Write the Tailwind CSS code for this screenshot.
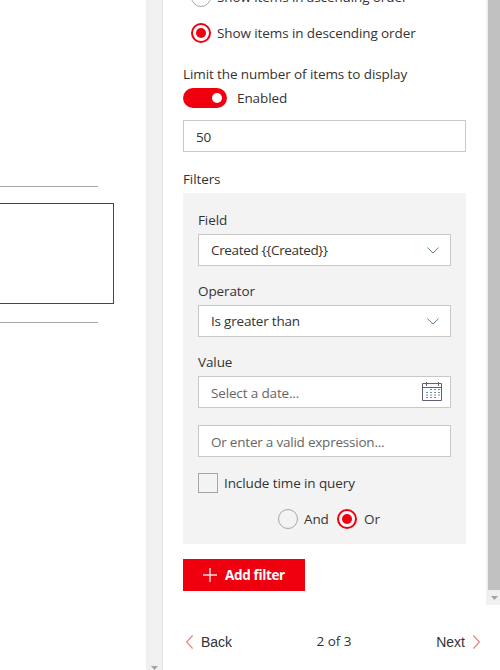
<!DOCTYPE html>
<html lang="en">
<head>
<meta charset="utf-8">
<title>Filter settings</title>
<script src="https://cdn.jsdelivr.net/npm/@tailwindcss/browser@4"></script>
</head>
<body class="w-[500px] h-[670px] overflow-hidden bg-white flex text-[13.5px] tracking-[-0.1px] leading-5 text-[#333] font-['Open_Sans','Noto_Sans',sans-serif] whitespace-nowrap">
  <section class="w-[146px] shrink-0 pt-[186px]">
    <div class="w-[98px] h-px bg-[#a6a6a6]"></div>
    <div class="mt-4 w-[114px] h-[101px] border border-l-0 border-[#e3000f]"></div>
    <div class="mt-[18px] w-[98px] h-px bg-[#a6a6a6]"></div>
  </section>
  <div class="w-[17px] shrink-0 bg-[#f0f0f0] border-r border-[#e5e5e5] flex flex-col justify-end items-center">
    <svg class="w-[7px] h-[4px]" viewBox="0 0 7 4"><path d="M0 0H7L3.5 4Z" fill="#a3a3a3"/></svg>
  </div>
  <main class="w-[337px] shrink-0">
    <div class="flex h-[605px]">
      <div class="w-[323px] pl-5 overflow-hidden">
        <div class="flex items-center h-5 mt-[-13px] pl-2 gap-[6px]"><span class="size-5 rounded-full border border-[#a6a6a6]"></span><span>Show items in ascending order</span></div>
        <div class="flex items-center h-5 mt-4 pl-2 gap-[6px]"><span class="size-5 rounded-full border-2 border-[#f0000f] flex items-center justify-center"><span class="size-[10px] rounded-full bg-[#f0000f]"></span></span><span>Show items in descending order</span></div>
        <div class="mt-[21px] h-5">Limit the number of items to display</div>
        <div class="mt-1 h-5 flex items-center gap-[10px]"><span class="w-11 h-5 rounded-full bg-[#f0000f] flex items-center justify-end pr-[5px]"><span class="size-[10px] rounded-full bg-white"></span></span><span>Enabled</span></div>
        <div class="mt-3 w-[283px] h-8 border border-[#c8c8c8] px-3 pt-px flex items-center">50</div>
        <div class="mt-[17px] h-5">Filters</div>
        <div class="mt-1 w-[283px] h-[351px] bg-[#f3f3f3] px-[15px] pt-[17px]">
          <div class="h-5">Field</div>
          <div class="mt-1 h-8 border border-[#c8c8c8] bg-white pl-3 pr-[11px] flex items-center justify-between"><span class="tracking-[-0.34px]">Created {{Created}}</span><svg class="w-3 h-[7px]" viewBox="0 0 12 7" fill="none" stroke="#5b7c94"><path d="M.4.6 6 6.1 11.6.6"/></svg></div>
          <div class="mt-[15px] h-5">Operator</div>
          <div class="mt-1 h-8 border border-[#c8c8c8] bg-white pl-3 pr-[11px] flex items-center justify-between"><span class="tracking-[-0.2px]">Is greater than</span><svg class="w-3 h-[7px]" viewBox="0 0 12 7" fill="none" stroke="#5b7c94"><path d="M.4.6 6 6.1 11.6.6"/></svg></div>
          <div class="mt-[15px] h-5">Value</div>
          <div class="mt-1 h-8 border border-[#c8c8c8] bg-white pl-3 pr-2 flex items-center justify-between text-[#666]"><span class="pt-[2px] tracking-[-0.15px]">Select a date...</span>
            <svg class="w-5 h-[19px] mb-px" viewBox="0 0 20 19" fill="none" stroke="#625e75"><path d="M.5 1.5H19.5V18.5H.5ZM.5 5.5H19.5M4.5 0V4M16.5 0V4"/><path stroke="#7191aa" stroke-width="1.2" stroke-dasharray="2 2" d="M8 7.5H18M4 10.5H18M4 13H18M4 15.5H14"/></svg>
          </div>
          <div class="mt-[17px] h-8 border border-[#c8c8c8] bg-white px-3 pt-[2px] flex items-center text-[#666] tracking-[-0.22px]">Or enter a valid expression...</div>
          <div class="mt-4 h-5 flex items-center gap-[6px]"><span class="size-5 border border-[#a6a6a6]"></span><span>Include time in query</span></div>
          <div class="mt-4 h-5 pl-20 flex items-center gap-[7px]">
            <span class="size-5 rounded-full border border-[#a6a6a6]"></span><span class="w-[25px] -ml-px mr-px">And</span>
            <span class="size-5 rounded-full border-2 border-[#f0000f] flex items-center justify-center bg-[#f8f8f8]"><span class="size-[10px] rounded-full bg-[#f0000f]"></span></span><span>Or</span>
          </div>
        </div>
        <div class="mt-[15px] w-[122px] h-8 bg-[#f0000f] text-white font-bold tracking-[-0.35px] flex items-center pl-5 gap-2"><svg class="size-[14px]" viewBox="0 0 14 14" stroke="#ffe0e0" stroke-width="1.4" fill="none"><path d="M7 0V14M0 7H14"/></svg><span>Add filter</span></div>
      </div>
      <div class="w-[14px] bg-[#f0f0f0] pl-[2px]">
        <div class="h-[590px] bg-[#c1c1c1]"></div>
        <svg class="ml-[3px] mt-[6px] w-[7px] h-[4px]" viewBox="0 0 7 4"><path d="M0 0H7L3.5 4Z" fill="#a3a3a3"/></svg>
      </div>
    </div>
    <footer class="mt-[27px] h-5 pl-[23px] pr-5 flex items-center justify-between text-[14px] tracking-normal">
      <div class="flex items-center gap-2 w-[131px] font-['Liberation_Sans',sans-serif]"><svg class="w-[7px] h-[14px]" viewBox="0 0 7 14" fill="none" stroke="#ee8580" stroke-width="1.3"><path d="M6.6.4.6 7 6.6 13.6"/></svg><span>Back</span></div>
      <span class="text-[13.5px] pb-[2px]">2 of 3</span>
      <div class="flex items-center gap-2 w-[129px] justify-end font-['Liberation_Sans',sans-serif]"><span>Next</span><svg class="w-[7px] h-[14px]" viewBox="0 0 7 14" fill="none" stroke="#ee8580" stroke-width="1.3"><path d="M.4.4 6.4 7 .4 13.6"/></svg></div>
    </footer>
  </main>
</body>
</html>
